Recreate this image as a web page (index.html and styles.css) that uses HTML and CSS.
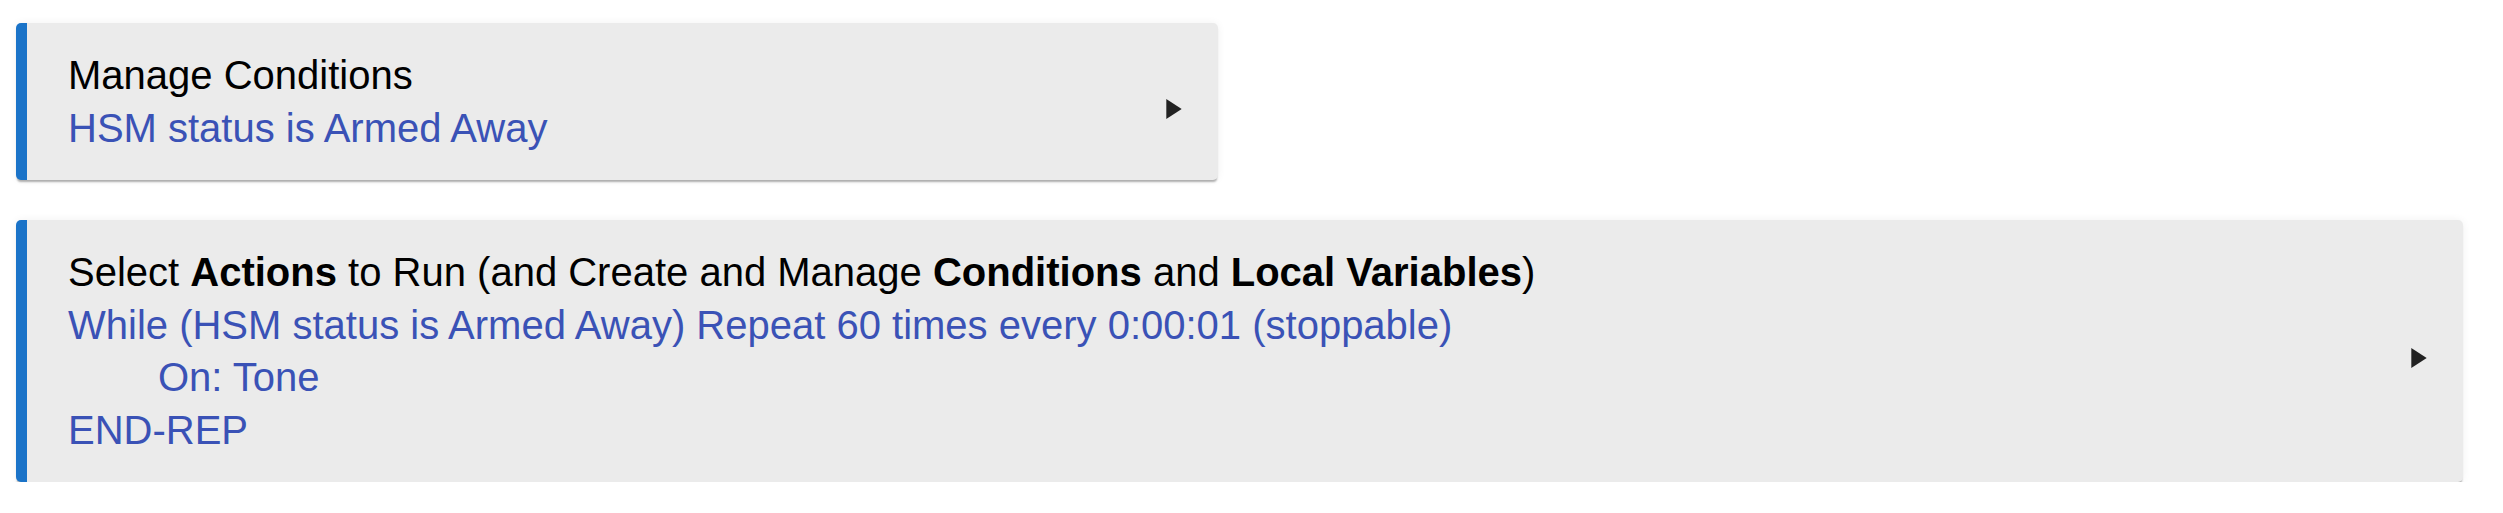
FILE: index.html
```html
<!DOCTYPE html>
<html lang="en">
<head>
    <meta charset="UTF-8">
    <title>Rule Actions</title>
    <link rel="stylesheet" href="styles.css">
</head>
<body>
    <div class="rule-page">
        <a href="#" class="rule-card narrow">
            <div class="rule-text">
                <div class="title">Manage Conditions</div>
                <div class="summary">HSM status is Armed Away</div>
            </div>
            <svg class="arrow" viewBox="0 0 16 20"><path d="M1 1 L15 10 L1 19 Z"/></svg>
        </a>
        <a href="#" class="rule-card wide">
            <div class="rule-text">
                <div class="title">Select <b>Actions</b> to Run (and Create and Manage <b>Conditions</b> and <b>Local Variables</b>)</div>
                <div class="summary">While (HSM status is Armed Away) Repeat 60 times every 0:00:01 (stoppable)</div>
                <div class="summary indent">On: Tone</div>
                <div class="summary">END-REP</div>
            </div>
            <svg class="arrow" viewBox="0 0 16 20"><path d="M1 1 L15 10 L1 19 Z"/></svg>
        </a>
    </div>
</body>
</html>
```

FILE: styles.css
```css
body {
    margin: 0;
    background-color: #fff;
    font-family: "Liberation Sans", Arial, sans-serif;
}

.rule-page {
    display: flex;
    flex-direction: column;
    align-items: flex-start;
    gap: 40px;
    padding: 23px 40px 0 16px;
}

.rule-card {
    display: flex;
    align-items: center;
    box-sizing: border-box;
    background-color: #ebebeb;
    border-left: 11px solid #1a73c8;
    border-radius: 5px;
    padding: 26px 35px 26px 41px;
    box-shadow: 0 3px 2px -1px rgba(0, 0, 0, 0.3), 0 0 9px rgba(0, 0, 0, 0.06);
    text-decoration: none;
    color: #000;
}

.rule-card.narrow {
    width: 1202px;
}

.rule-card.wide {
    width: 100%;
}

.rule-text {
    flex-grow: 1;
    font-size: 40px;
    line-height: 52.5px;
}

.summary {
    color: #3a52b6;
}

.summary.indent {
    padding-left: 90px;
}

.arrow {
    width: 18px;
    height: 22px;
    margin-top: 14px;
    fill: #222;
}
```
